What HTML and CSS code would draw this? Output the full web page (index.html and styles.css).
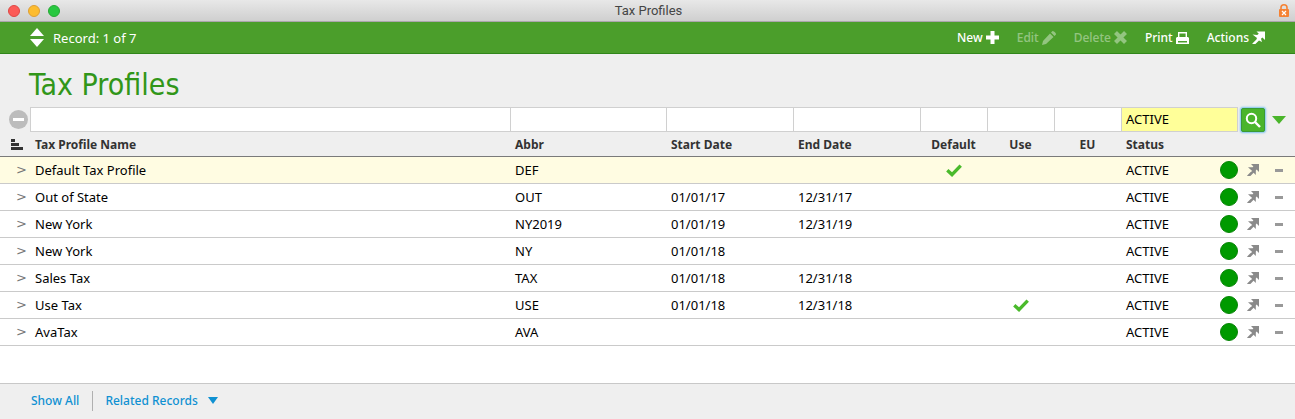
FILE: index.html
```
<!DOCTYPE html>
<html lang="en">
<head>
    <meta charset="UTF-8">
    <meta name="viewport" content="width=device-width, initial-scale=1.0">
    <title>Tax Profiles</title>
    <link rel="stylesheet" href="styles.css">
</head>
<body>
    <svg class="sprite" aria-hidden="true">
        <symbol id="check" viewBox="0 0 16 13"><path d="M1.300 6.300L6 10.600L14.700 1.600" fill="none" stroke="#4aba2b" stroke-width="3.400"/></symbol>
        <symbol id="arrow" viewBox="0 0 13 13"><path d="M4.500 0.500H13V9L10.400 6.400L9 7.800L10 11L7 9.400L3.400 13H0.400V12.400L4.400 8.400L5 7L0.500 3.600L5.200 4L6.800 2.800Z" fill="currentColor"/></symbol>
        <symbol id="jump" viewBox="0 0 12 12"><path d="M4 0H12V8L9.600 5.600L8.800 6.400V11L6.600 8.800L3.400 12H0.200V11.400L3.400 8.200L5.200 7L3.200 5.200L1 3.200H5.600L6.400 2.400Z" fill="currentColor"/></symbol>
    </svg>

    <div class="titlebar">
        <div class="lights">
            <span class="light close"></span>
            <span class="light minimize"></span>
            <span class="light zoom"></span>
        </div>
        <span class="window-title">Tax Profiles</span>
        <svg class="lock" width="10" height="14" viewBox="0 0 10 14"><path d="M2 6V3.500a3 2.700 0 0 1 6 0V6" fill="none" stroke="#f58233" stroke-width="1.600"/><rect x="0" y="5" width="10" height="8" rx="1" fill="#f58233"/><path d="M3 7l4 4M7 7l-4 4" stroke="#fff" stroke-width="1.200"/></svg>
    </div>

    <div class="toolbar">
        <button class="stepper" aria-label="Change record">
            <svg width="14" height="19" viewBox="0 0 14 19"><path d="M7 0L14 8H0ZM0 11H14L7 19Z" fill="#fff"/></svg>
        </button>
        <span class="record">Record: 1 of 7</span>
        <div class="actions">
            <button>New <svg width="13" height="13" viewBox="0 0 13 13"><path d="M4.500 0h4v4.500H13v4H8.500V13h-4V8.500H0v-4h4.500Z" fill="#fff"/></svg></button>
            <button disabled>Edit <svg width="14" height="14" viewBox="0 0 14 14"><path d="M8 2.500L11.500 6L4 13L0 14L1 10ZM9 1.500L10.500 0Q14 1 14 3.500L12.500 5Z" fill="#fff"/></svg></button>
            <button disabled>Delete <svg width="13" height="13" viewBox="0 0 13 13"><path d="M1.500 1.500L11.500 11.500M11.500 1.500L1.500 11.500" stroke="#fff" stroke-width="4.200"/></svg></button>
            <button>Print <svg width="13" height="12" viewBox="0 0 13 12"><path d="M2.700 6V.7H10.300V6" fill="none" stroke="#fff" stroke-width="1.400"/><path d="M1 5H12L13 6V12H11V9H2V12H0V6ZM2 10.500H11V12H2Z" fill="#fff"/></svg></button>
            <button>Actions <svg width="13" height="13"><use href="#arrow"/></svg></button>
        </div>
    </div>

    <h1>Tax Profiles</h1>

    <table>
        <colgroup>
            <col class="col-open">
            <col>
            <col class="col-abbr">
            <col class="col-date">
            <col class="col-date">
            <col class="col-flag">
            <col class="col-flag">
            <col class="col-flag">
            <col class="col-status">
            <col class="col-jump">
            <col class="col-remove">
        </colgroup>
        <thead>
            <tr class="filters">
                <td class="tool"><button aria-label="Clear filters"><svg width="19" height="19" viewBox="0 0 19 19"><circle cx="9.500" cy="9.500" r="9.500" fill="#bcbcbc"/><rect x="4" y="8" width="11" height="3" fill="#fff"/></svg></button></td>
                <td><input type="text" aria-label="Filter by name"></td>
                <td><input type="text" aria-label="Filter by abbreviation"></td>
                <td><input type="text" aria-label="Filter by start date"></td>
                <td><input type="text" aria-label="Filter by end date"></td>
                <td><input type="text" aria-label="Filter by default"></td>
                <td><input type="text" aria-label="Filter by use"></td>
                <td><input type="text" aria-label="Filter by EU"></td>
                <td><input class="filled" type="text" value="ACTIVE" aria-label="Filter by status"></td>
                <td class="icon"><button class="search" aria-label="Search"><svg width="16" height="16" viewBox="0 0 16 16"><circle cx="6.500" cy="6.500" r="4.700" fill="none" stroke="#fff" stroke-width="2"/><path d="M10 10L15 15" stroke="#fff" stroke-width="2.400"/></svg></button></td>
                <td class="icon last"><button aria-label="Search options"><svg width="14" height="8" viewBox="0 0 14 8"><path d="M0 0H14L7 8Z" fill="#4ab52b"/></svg></button></td>
            </tr>
            <tr class="headings">
                <th class="tool"><button aria-label="Sort"><svg width="12" height="11" viewBox="0 0 12 11"><path d="M0 0H4V3H0ZM0 4H8V7H0ZM0 8H12V11H0Z" fill="#333"/></svg></button></th>
                <th>Tax Profile Name</th>
                <th>Abbr</th>
                <th>Start Date</th>
                <th>End Date</th>
                <th class="flag">Default</th>
                <th class="flag">Use</th>
                <th class="flag">EU</th>
                <th>Status</th>
                <th></th>
                <th></th>
            </tr>
        </thead>
        <tbody>
            <tr class="current">
                <td class="open"><button>&gt;</button></td>
                <td>Default Tax Profile</td>
                <td>DEF</td>
                <td></td>
                <td></td>
                <td class="flag"><svg width="16" height="13"><use href="#check"/></svg></td>
                <td></td>
                <td></td>
                <td><div class="status">ACTIVE <span class="dot"></span></div></td>
                <td class="icon"><button aria-label="Go to record"><svg width="12" height="12"><use href="#jump"/></svg></button></td>
                <td class="icon last"><button aria-label="Remove"><span class="minus"></span></button></td>
            </tr>
            <tr>
                <td class="open"><button>&gt;</button></td>
                <td>Out of State</td>
                <td>OUT</td>
                <td>01/01/17</td>
                <td>12/31/17</td>
                <td></td>
                <td></td>
                <td></td>
                <td><div class="status">ACTIVE <span class="dot"></span></div></td>
                <td class="icon"><button aria-label="Go to record"><svg width="12" height="12"><use href="#jump"/></svg></button></td>
                <td class="icon last"><button aria-label="Remove"><span class="minus"></span></button></td>
            </tr>
            <tr>
                <td class="open"><button>&gt;</button></td>
                <td>New York</td>
                <td>NY2019</td>
                <td>01/01/19</td>
                <td>12/31/19</td>
                <td></td>
                <td></td>
                <td></td>
                <td><div class="status">ACTIVE <span class="dot"></span></div></td>
                <td class="icon"><button aria-label="Go to record"><svg width="12" height="12"><use href="#jump"/></svg></button></td>
                <td class="icon last"><button aria-label="Remove"><span class="minus"></span></button></td>
            </tr>
            <tr>
                <td class="open"><button>&gt;</button></td>
                <td>New York</td>
                <td>NY</td>
                <td>01/01/18</td>
                <td></td>
                <td></td>
                <td></td>
                <td></td>
                <td><div class="status">ACTIVE <span class="dot"></span></div></td>
                <td class="icon"><button aria-label="Go to record"><svg width="12" height="12"><use href="#jump"/></svg></button></td>
                <td class="icon last"><button aria-label="Remove"><span class="minus"></span></button></td>
            </tr>
            <tr>
                <td class="open"><button>&gt;</button></td>
                <td>Sales Tax</td>
                <td>TAX</td>
                <td>01/01/18</td>
                <td>12/31/18</td>
                <td></td>
                <td></td>
                <td></td>
                <td><div class="status">ACTIVE <span class="dot"></span></div></td>
                <td class="icon"><button aria-label="Go to record"><svg width="12" height="12"><use href="#jump"/></svg></button></td>
                <td class="icon last"><button aria-label="Remove"><span class="minus"></span></button></td>
            </tr>
            <tr>
                <td class="open"><button>&gt;</button></td>
                <td>Use Tax</td>
                <td>USE</td>
                <td>01/01/18</td>
                <td>12/31/18</td>
                <td></td>
                <td class="flag"><svg width="16" height="13"><use href="#check"/></svg></td>
                <td></td>
                <td><div class="status">ACTIVE <span class="dot"></span></div></td>
                <td class="icon"><button aria-label="Go to record"><svg width="12" height="12"><use href="#jump"/></svg></button></td>
                <td class="icon last"><button aria-label="Remove"><span class="minus"></span></button></td>
            </tr>
            <tr>
                <td class="open"><button>&gt;</button></td>
                <td>AvaTax</td>
                <td>AVA</td>
                <td></td>
                <td></td>
                <td></td>
                <td></td>
                <td></td>
                <td><div class="status">ACTIVE <span class="dot"></span></div></td>
                <td class="icon"><button aria-label="Go to record"><svg width="12" height="12"><use href="#jump"/></svg></button></td>
                <td class="icon last"><button aria-label="Remove"><span class="minus"></span></button></td>
            </tr>
        </tbody>
    </table>

    <footer>
        <a href="#">Show All</a>
        <a class="related" href="#">Related Records <svg width="10" height="7" viewBox="0 0 10 7"><path d="M0 0H10L5 7Z" fill="#0f91d2"/></svg></a>
    </footer>
</body>
</html>
```
FILE: styles.css
```
* {
    box-sizing: border-box;
}
body {
    font-family: "Noto Sans", sans-serif;
    font-size: 13px;
    display: flex;
    flex-direction: column;
    min-height: 100vh;
    margin: 0;
    background-color: #fff;
    color: #000;
}
button {
    display: inline-flex;
    align-items: center;
    padding: 0;
    border: none;
    background: none;
    color: inherit;
    font: inherit;
    cursor: pointer;
}
svg {
    display: block;
    flex: none;
}
.sprite {
    position: absolute;
    width: 0;
    height: 0;
}

/* Window title bar */
.titlebar {
    display: grid;
    grid-template-columns: 1fr auto 1fr;
    align-items: center;
    height: 22px;
    padding: 0 6px 0 8px;
    background: linear-gradient(#e8e8e8, #cfcfcf);
    border-bottom: 1px solid #aba6ac;
}
.lights {
    display: flex;
    gap: 8px;
}
.light {
    width: 12px;
    height: 12px;
    border-radius: 50%;
}
.close {
    background-color: #fc5b57;
    border: 1px solid #df4744;
}
.minimize {
    background-color: #fdbc2e;
    border: 1px solid #de9f34;
}
.zoom {
    background-color: #28c840;
    border: 1px solid #26a934;
}
.window-title {
    font-family: Roboto, sans-serif;
    color: #454545;
}
.lock {
    justify-self: end;
}

/* Green toolbar */
.toolbar {
    display: flex;
    align-items: center;
    height: 32px;
    padding: 0 30px;
    background-color: #4b9e2b;
    border-bottom: 1px solid #30861a;
    color: #fff;
}
.record {
    margin-left: 9px;
}
.actions {
    display: flex;
    gap: 18px;
    margin-left: auto;
    font-size: 12px;
    font-weight: 500;
}
.actions button {
    gap: 3px;
}
.actions button:disabled {
    opacity: 0.4;
    cursor: default;
}

h1 {
    margin: 0;
    padding: 10px 29px 0;
    height: 53px;
    background-color: #efefef;
    color: #319619;
    font-family: "DejaVu Sans Condensed", "Noto Sans", sans-serif;
    font-size: 30px;
    font-weight: 400;
    line-height: 42px;
}

/* Record list */
table {
    width: 100%;
    table-layout: fixed;
    border-collapse: separate;
    border-spacing: 0;
}
.col-open {
    width: 30px;
}
.col-abbr {
    width: 156px;
}
.col-date {
    width: 127px;
}
.col-flag {
    width: 67px;
}
.col-status {
    width: 117px;
}
.col-jump {
    width: 30px;
}
.col-remove {
    width: 27px;
}
thead {
    background-color: #efefef;
}
td, th {
    padding: 0 0 0 5px;
    text-align: left;
    vertical-align: middle;
}
.filters td {
    height: 25px;
    padding: 0;
}
.filters input {
    display: block;
    width: 100%;
    height: 25px;
    padding: 0 4px 2px;
    border: 1px solid #d0d0d0;
    border-right: none;
    border-radius: 0;
    background-color: #fff;
    font: inherit;
}
.filters .filled {
    border-right: 1px solid #d0d0d0;
    background-color: #ffff99;
}
.filters .tool {
    padding-left: 9px;
}
.tool button, .icon button {
    display: flex;
}
.icon button {
    margin: 0 auto;
}
.icon .search {
    justify-content: center;
    width: 24px;
    height: 24px;
    border: 1px solid #3a9a36;
    border-radius: 2px;
    background-color: #4ab52b;
    box-shadow: 0 0 2px 1px #7cc4ee;
}
.headings th {
    height: 25px;
    border-bottom: 1px solid #7a7a7a;
    color: #333;
    font-size: 12px;
    font-weight: 700;
}
.headings .tool {
    padding-left: 11px;
}
tbody td {
    height: 27px;
    border-bottom: 1px solid #cacaca;
}
.current {
    background-color: #fffce2;
}
.open {
    padding-left: 16px;
    color: #777;
    font-family: "DejaVu Sans", sans-serif;
    line-height: 16px;
}
td.flag, th.flag, td.icon {
    padding: 0;
    text-align: center;
}
table td.last {
    padding-right: 5px;
}
.flag svg {
    margin: 0 auto;
}
tbody .icon {
    color: #8a8a8a;
}
.status {
    display: flex;
    align-items: center;
    justify-content: space-between;
}
.dot {
    width: 18px;
    height: 18px;
    border: 1px solid #078507;
    border-radius: 50%;
    background-color: #009a00;
}
.minus {
    width: 8px;
    height: 3px;
    background-color: #999;
}

footer {
    display: flex;
    align-items: center;
    height: 36px;
    margin-top: auto;
    padding: 0 31px 2px;
    background-color: #efefef;
    border-top: 1px solid #c8c8c8;
    font-size: 12px;
    font-weight: 500;
}
footer a {
    color: #0f91d2;
    text-decoration: none;
}
.related {
    display: flex;
    align-items: center;
    gap: 10px;
    height: 20px;
    margin-left: 13px;
    padding-left: 12px;
    border-left: 1px solid #b0b0b0;
}
```
